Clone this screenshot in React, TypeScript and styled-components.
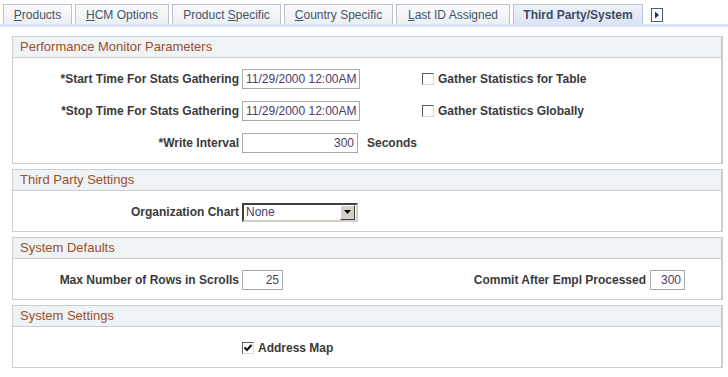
import React from "react";
import styled, { createGlobalStyle } from "styled-components";

const GlobalStyle = createGlobalStyle`
  body {
    margin: 0;
    background: #ffffff;
    font-family: Arial, "Liberation Sans", sans-serif;
    font-size: 12px;
    color: #333333;
  }
`;

const tabs = [
  { pre: "", key: "P", post: "roducts", w: 69 },
  { pre: "", key: "H", post: "CM Options", w: 94 },
  { pre: "Product ", key: "S", post: "pecific", w: 109 },
  { pre: "", key: "C", post: "ountry Specific", w: 109 },
  { pre: "", key: "L", post: "ast ID Assigned", w: 114 },
];

const App = () => {
  return (
    <Page>
      <GlobalStyle />
      <TabBar>
        {tabs.map((t, i) => (
          <Tab key={i} w={t.w}>
            {t.pre}
            <u>{t.key}</u>
            {t.post}
          </Tab>
        ))}
        <Tab active w={130}>Third Party/System</Tab>
        <TabArrow>
          <svg width="12" height="14" viewBox="0 0 12 14">
            <rect x="0.5" y="0.5" width="11" height="13" fill="#fff" stroke="#4a5b82" />
            <path d="M4 3.5 L8 7 L4 10.5 Z" fill="#25365c" />
          </svg>
        </TabArrow>
      </TabBar>

      <Content>
        <Section>
          <SectionHeader>Performance Monitor Parameters</SectionHeader>
          <SectionBody>
            <Row>
              <Label>*Start Time For Stats Gathering</Label>
              <TextInput width={118}>11/29/2000 12:00AM</TextInput>
              <CheckField spaced>
                <Check />
                Gather Statistics for Table
              </CheckField>
            </Row>
            <Row>
              <Label>*Stop Time For Stats Gathering</Label>
              <TextInput width={118}>11/29/2000 12:00AM</TextInput>
              <CheckField spaced>
                <Check />
                Gather Statistics Globally
              </CheckField>
            </Row>
            <Row>
              <Label>*Write Interval</Label>
              <TextInput width={116} right>300</TextInput>
              <Unit>Seconds</Unit>
            </Row>
          </SectionBody>
        </Section>

        <Section>
          <SectionHeader>Third Party Settings</SectionHeader>
          <SectionBody compact>
            <Row>
              <Label>Organization Chart</Label>
              <Select>
                <SelectValue>None</SelectValue>
                <SelectButton>
                  <svg width="7" height="4" viewBox="0 0 7 4">
                    <path d="M0 0 H7 L3.5 4 Z" fill="#000" />
                  </svg>
                </SelectButton>
              </Select>
            </Row>
          </SectionBody>
        </Section>

        <Section>
          <SectionHeader>System Defaults</SectionHeader>
          <SectionBody compact>
            <Row>
              <Label>Max Number of Rows in Scrolls</Label>
              <TextInput width={41} right>25</TextInput>
              <RightGroup>
                <SideLabel>Commit After Empl Processed</SideLabel>
                <TextInput width={35} right>300</TextInput>
              </RightGroup>
            </Row>
          </SectionBody>
        </Section>

        <Section>
          <SectionHeader>System Settings</SectionHeader>
          <SectionBody compact>
            <Row>
              <LabelSpacer />
              <CheckField>
                <Check>
                  <svg width="10" height="10" viewBox="0 0 10 10">
                    <path d="M1.5 4.5 L4 7 L8.5 2" stroke="#000" strokeWidth="2" fill="none" />
                  </svg>
                </Check>
                Address Map
              </CheckField>
            </Row>
          </SectionBody>
        </Section>
      </Content>
    </Page>
  );
};

const Page = styled.div`
  width: 728px;
  height: 377px;
  padding-top: 3px;
  box-sizing: border-box;
  overflow: hidden;
`;

const TabBar = styled.div`
  display: flex;
  align-items: flex-end;
  gap: 3px;
  padding-left: 3px;
  height: 21px;
  border-bottom: 3px solid #d9e3f1;
`;

const Tab = styled.div<{ active?: boolean; w: number }>`
  width: ${p => p.w}px;
  height: 20px;
  box-sizing: border-box;
  line-height: 20px;
  text-align: center;
  border: 1px solid #b9c3cf;
  border-bottom: none;
  font-size: 12px;
  font-weight: ${p => (p.active ? "bold" : "normal")};
  color: ${p => (p.active ? "#3f4d63" : "#44536b")};
  background: ${p =>
    p.active
      ? "linear-gradient(#eef2f8, #dbe4f1)"
      : "linear-gradient(#fbfbfc, #eceff3)"};
  white-space: nowrap;

  u {
    text-decoration: underline;
  }
`;

const TabArrow = styled.div`
  display: flex;
  align-self: center;
  margin-left: 5px;
  padding-top: 3px;
`;

const Content = styled.div`
  display: flex;
  flex-direction: column;
  gap: 5px;
  padding: 9px 5px 0 12px;
`;

const Section = styled.div`
  display: flex;
  flex-direction: column;
`;

const SectionHeader = styled.div`
  height: 20px;
  line-height: 20px;
  padding-left: 7px;
  border: 1px solid #c9ced4;
  border-right-width: 2px;
  background: #eff3f5;
  color: #9c4f2b;
  font-size: 13px;
`;

const SectionBody = styled.div<{ compact?: boolean }>`
  display: flex;
  flex-direction: column;
  gap: 12px;
  padding: 11px 0 ${p => (p.compact ? "9px" : "10px")};
  border: 1px solid #c9ced4;
  border-top: none;
  border-right-width: 2px;
`;

const Row = styled.div`
  display: flex;
  align-items: center;
  height: 20px;
`;

const Label = styled.div`
  width: 226px;
  padding-right: 3px;
  text-align: right;
  font-weight: bold;
  color: #3a3a3a;
  white-space: nowrap;
`;

const LabelSpacer = styled.div`
  width: 229px;
`;

const SideLabel = styled(Label)`
  width: auto;
  padding-right: 4px;
`;

const TextInput = styled.div<{ width: number; right?: boolean }>`
  width: ${p => p.width}px;
  height: 20px;
  box-sizing: border-box;
  border: 1px solid #a9a9a9;
  padding: 0 3px;
  line-height: 18px;
  font-size: 12px;
  color: #4b3b6a;
  text-align: ${p => (p.right ? "right" : "left")};
  white-space: nowrap;
  background: #fff;
`;

const CheckField = styled.label<{ spaced?: boolean }>`
  display: flex;
  align-items: center;
  gap: 3px;
  margin-left: ${p => (p.spaced ? "62px" : "0")};
  font-weight: bold;
  color: #3a3a3a;
`;

const Check = styled.span`
  display: flex;
  align-items: center;
  justify-content: center;
  width: 12px;
  height: 12px;
  box-sizing: border-box;
  border: 1px solid;
  border-color: #5a5a5a #d8d8d8 #d8d8d8 #5a5a5a;
  background: #fff;
  margin-right: 1px;
`;

const Unit = styled.span`
  margin-left: 9px;
  font-weight: bold;
  color: #3a3a3a;
`;

const RightGroup = styled.div`
  display: flex;
  align-items: center;
  margin-left: auto;
  margin-right: 36px;
`;

const Select = styled.div`
  display: flex;
  align-items: center;
  width: 116px;
  height: 19px;
  box-sizing: border-box;
  border: 2px solid;
  border-color: #3f3f3f #d4d0c8 #d4d0c8 #3f3f3f;
  background: #fff;
`;

const SelectValue = styled.span`
  flex: 1;
  padding-left: 2px;
  font-size: 12px;
  color: #4b3b6a;
`;

const SelectButton = styled.span`
  display: flex;
  align-items: center;
  justify-content: center;
  width: 13px;
  height: 13px;
  margin-right: 1px;
  background: #d4d0c8;
  border: 1px solid;
  border-color: #fff #404040 #404040 #fff;
`;

export default App;
